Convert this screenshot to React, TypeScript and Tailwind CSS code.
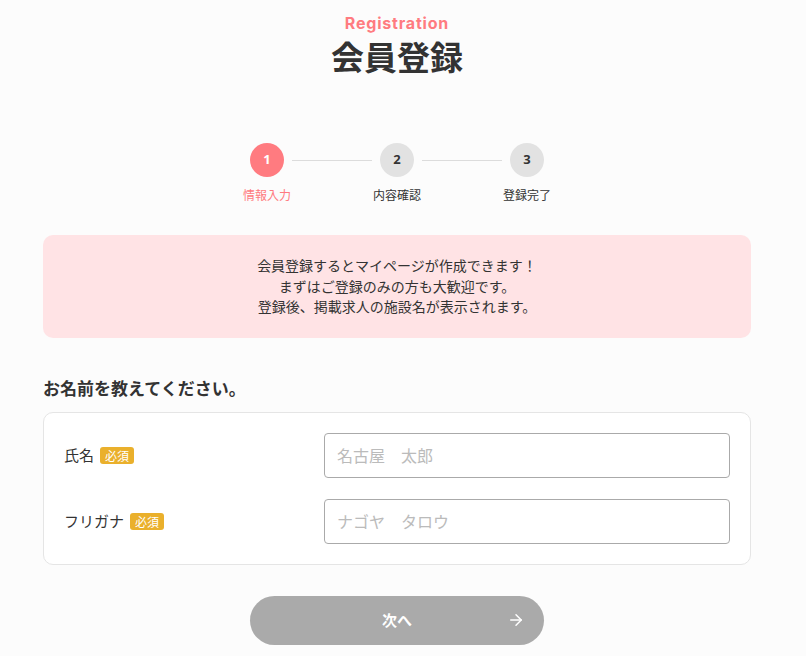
import { ArrowRight } from 'lucide-react';

const jp = "font-['Noto_Sans_CJK_JP','Noto_Sans',sans-serif]";

const steps = [
  { no: 1, label: '情報入力', active: true },
  { no: 2, label: '内容確認', active: false },
  { no: 3, label: '登録完了', active: false },
];

function Stepper() {
  return (
    <div className="flex items-start justify-center">
      {steps.map((s, i) => (
        <div key={s.no} className="flex items-start">
          {i > 0 && <div className="mx-2 mt-[17px] h-px w-[80px] bg-[#dcdcdc]" />}
          <div className="flex w-[34px] flex-col items-center">
            <div
              className={
                s.active
                  ? "flex h-[34px] w-[34px] items-center justify-center rounded-full bg-[#ff7b80] text-[13px] font-bold text-white font-['Open_Sans',sans-serif]"
                  : "flex h-[34px] w-[34px] items-center justify-center rounded-full bg-[#e2e2e2] text-[13px] font-bold text-[#333] font-['Open_Sans',sans-serif]"
              }
            >
              {s.no}
            </div>
            <span
              className={
                s.active
                  ? 'mt-[10px] whitespace-nowrap text-[12px] leading-4 text-[#ff7b80]'
                  : 'mt-[10px] whitespace-nowrap text-[12px] leading-4 text-[#333]'
              }
            >
              {s.label}
            </span>
          </div>
        </div>
      ))}
    </div>
  );
}

function Field({ label, placeholder }: { label: string; placeholder: string }) {
  return (
    <div className="flex items-center">
      <div className="flex w-[260px] items-center gap-[6px]">
        <span className="text-[15px] text-[#333]">{label}</span>
        <span className="rounded-[3px] bg-[#eab02c] px-[5px] text-[12px] leading-[17px] text-white">必須</span>
      </div>
      <input
        placeholder={placeholder}
        className="h-[45px] flex-1 rounded-[4px] border border-[#aaa] bg-white px-3 text-[16px] text-[#333] outline-none placeholder:text-[#bbb]"
      />
    </div>
  );
}

export default function App() {
  return (
    <div className={`min-h-screen bg-[#fcfcfc] ${jp}`}>
      <div className="w-[794px] px-[43px] pt-[13px] pb-10">
        <p className="text-center font-['Inter',sans-serif] text-[16px] font-bold leading-5 tracking-[0.8px] text-[#ff7b80]">
          Registration
        </p>
        <h1 className="mt-[3px] text-center text-[33px] font-bold leading-10 text-[#333]">会員登録</h1>

        <div className="mt-[67px]">
          <Stepper />
        </div>

        <div className="mt-[32px] rounded-[10px] bg-[#ffe3e5] pt-[20px] pb-[21px] text-center text-[14px] leading-[20.5px] text-[#333]">
          <p>会員登録するとマイページが作成できます！</p>
          <p>まずはご登録のみの方も大歓迎です。</p>
          <p>登録後、掲載求人の施設名が表示されます。</p>
        </div>

        <h2 className="mt-[40px] text-[17px] font-bold leading-5 text-[#333]">お名前を教えてください。</h2>

        <div className="mt-[14px] flex flex-col gap-[21px] rounded-[10px] border border-[#e5e5e5] bg-white px-[20px] py-[20px]">
          <Field label="氏名" placeholder="名古屋　太郎" />
          <Field label="フリガナ" placeholder="ナゴヤ　タロウ" />
        </div>

        <div className="mt-[31px] flex justify-center">
          <button className="relative flex h-[49px] w-[294px] items-center justify-center rounded-full bg-[#aaa] text-[15px] font-bold text-white">
            次へ
            <ArrowRight className="absolute right-[19px] h-[18px] w-[18px]" strokeWidth={2} />
          </button>
        </div>
      </div>
    </div>
  );
}
